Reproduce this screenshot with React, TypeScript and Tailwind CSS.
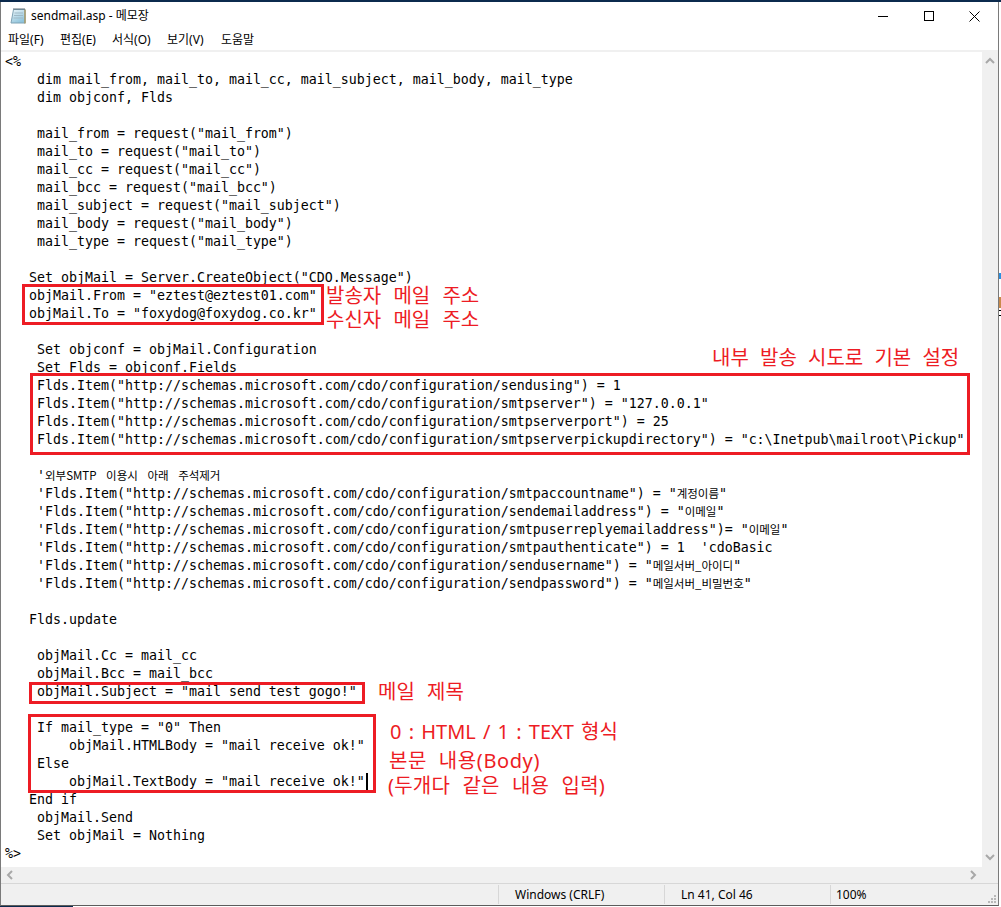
import type { ReactNode } from 'react';

const Kr = ({ children }: { children: ReactNode }) => (
  <span className="text-[11.5px] leading-none [word-spacing:7px] [font-family:'Noto_Sans_CJK_KR',sans-serif]">{children}</span>
);

const base = 'http://schemas.microsoft.com/cdo/configuration';

const codeLines: ReactNode[] = [
  '<%',
  '    dim mail_from, mail_to, mail_cc, mail_subject, mail_body, mail_type',
  '    dim objconf, Flds',
  '',
  '    mail_from = request("mail_from")',
  '    mail_to = request("mail_to")',
  '    mail_cc = request("mail_cc")',
  '    mail_bcc = request("mail_bcc")',
  '    mail_subject = request("mail_subject")',
  '    mail_body = request("mail_body")',
  '    mail_type = request("mail_type")',
  '',
  '   Set objMail = Server.CreateObject("CDO.Message")',
  '   objMail.From = "eztest@eztest01.com"',
  '   objMail.To = "foxydog@foxydog.co.kr"',
  '',
  '    Set objconf = objMail.Configuration',
  '    Set Flds = objconf.Fields',
  `    Flds.Item("${base}/sendusing") = 1`,
  `    Flds.Item("${base}/smtpserver") = "127.0.0.1"`,
  `    Flds.Item("${base}/smtpserverport") = 25`,
  `    Flds.Item("${base}/smtpserverpickupdirectory") = "c:\\Inetpub\\mailroot\\Pickup"`,
  '',
  <>{"    '"}<Kr>외부SMTP 이용시 아래 주석제거</Kr></>,
  <>{`    'Flds.Item("${base}/smtpaccountname") = "`}<Kr>계정이름</Kr>{'"'}</>,
  <>{`    'Flds.Item("${base}/sendemailaddress") = "`}<Kr>이메일</Kr>{'"'}</>,
  <>{`    'Flds.Item("${base}/smtpuserreplyemailaddress")= "`}<Kr>이메일</Kr>{'"'}</>,
  `    'Flds.Item("${base}/smtpauthenticate") = 1  'cdoBasic`,
  <>{`    'Flds.Item("${base}/sendusername") = "`}<Kr>메일서버_아이디</Kr>{'"'}</>,
  <>{`    'Flds.Item("${base}/sendpassword") = "`}<Kr>메일서버_비밀번호</Kr>{'"'}</>,
  '',
  '   Flds.update',
  '',
  '    objMail.Cc = mail_cc',
  '    objMail.Bcc = mail_bcc',
  '    objMail.Subject = "mail send test gogo!"',
  '',
  '    If mail_type = "0" Then',
  '        objMail.HTMLBody = "mail receive ok!"',
  '    Else',
  <>{'        objMail.TextBody = "mail receive ok!"'}<span className="ml-px inline-block h-[18px] w-0 border-l-2 border-black align-middle" /></>,
  '   End if',
  '    objMail.Send',
  '    Set objMail = Nothing',
  '%>',
];

const menus = [
  { label: '파일(F)', w: 'w-[52px]' },
  { label: '편집(E)', w: 'w-[52px]' },
  { label: '서식(O)', w: 'w-[55px]' },
  { label: '보기(V)', w: 'w-[54px]' },
  { label: '도움말', w: 'w-[50px]' },
];

// red callouts drawn on top of the screenshot's text
const boxes = [
  'left-[22px] top-[232px] h-[41px] w-[302px]',
  'left-[30px] top-[321px] h-[82px] w-[940px]',
  'left-[29px] top-[630px] h-[22px] w-[336px]',
  'left-[28px] top-[662px] h-[79px] w-[348px]',
];

const notes = [
  { text: '발송자 메일 주소', cls: 'left-[326px] top-[232px] [word-spacing:7px]' },
  { text: '수신자 메일 주소', cls: 'left-[326px] top-[256px] [word-spacing:7px]' },
  { text: '내부 발송 시도로 기본 설정', cls: 'left-[712px] top-[294px] [word-spacing:6px]' },
  { text: '메일 제목', cls: 'left-[378px] top-[628px] [word-spacing:7px]' },
  { text: '0 : HTML / 1 : TEXT 형식', cls: 'left-[390px] top-[668px] text-[19.5px] [word-spacing:2px]' },
  { text: '본문 내용(Body)', cls: 'left-[389px] top-[697px] tracking-[0.6px] [word-spacing:6px]' },
  { text: '(두개다 같은 내용 입력)', cls: 'left-[388px] top-[722px] tracking-[0.2px] [word-spacing:7px]' },
];

function Chevron({ dir }: { dir: 'up' | 'down' | 'left' | 'right' }) {
  const points = {
    up: '1,7 5,3 9,7',
    down: '1,3 5,7 9,3',
    left: '7,1 3,5 7,9',
    right: '3,1 7,5 3,9',
  }[dir];
  return (
    <svg width="10" height="10" viewBox="0 0 10 10">
      <polyline points={points} fill="none" stroke="#a8a8a8" strokeWidth="2" />
    </svg>
  );
}

function NotepadIcon() {
  return (
    <svg width="17" height="18" viewBox="0 0 17 18" className="shrink-0">
      <defs>
        <linearGradient id="page" x1="0" y1="0" x2="0.6" y2="1">
          <stop offset="0" stopColor="#eef7fa" />
          <stop offset="1" stopColor="#8fc4dc" />
        </linearGradient>
      </defs>
      <path d="M3.5 2.5 H15 V16 H1 Z" fill="url(#page)" stroke="#7fa3b5" />
      <path d="M15 2.5 V16.5" stroke="#a89a68" strokeWidth="1.5" />
      <path d="M4 1 V3 M6 1 V3 M8 1 V3 M10 1 V3 M12 1 V3 M14 1 V3" stroke="#5f6f78" />
      <path d="M4.5 6 H13 M4 8.5 H13 M3.5 11 H13" stroke="#9fb9c6" />
    </svg>
  );
}

function Grip() {
  return (
    <svg width="9" height="9" viewBox="0 0 9 9" className="shrink-0" fill="#b8b8b8">
      <path d="M6 0 h2 v2 h-2 z M3 3 h2 v2 h-2 z M6 3 h2 v2 h-2 z M0 6 h2 v2 h-2 z M3 6 h2 v2 h-2 z M6 6 h2 v2 h-2 z" />
    </svg>
  );
}

export default function App() {
  return (
    <div className="flex h-[907px] w-[1001px] flex-col overflow-hidden bg-white text-black [font-family:'Noto_Sans','Noto_Sans_CJK_KR',sans-serif]">
      <div className="h-[2px] shrink-0 bg-[#0b2a4d]" />

      <div className="flex min-h-0 flex-1">
        <div className="flex min-w-0 flex-1 flex-col border-r border-b border-l border-r-[#7a7a7a] border-b-[#5c5c5c] border-l-[#7a7a7a]">
          {/* title bar */}
          <div className="flex h-[28px] shrink-0 items-center">
            <div className="flex items-center gap-[4px] pl-[9px] text-[12px]">
              <NotepadIcon />
              <span>sendmail.asp - 메모장</span>
            </div>
            <div className="ml-auto flex h-full items-center">
              <div className="flex w-[46px] justify-center">
                <div className="h-px w-[10px] bg-black" />
              </div>
              <div className="flex w-[46px] justify-center">
                <div className="size-[10px] border border-black" />
              </div>
              <div className="flex w-[46px] justify-center pr-px">
                <svg width="11" height="11" viewBox="0 0 11 11">
                  <path d="M0.5 0.5 L10.5 10.5 M10.5 0.5 L0.5 10.5" stroke="#000" strokeWidth="1" />
                </svg>
              </div>
            </div>
          </div>

          {/* menu */}
          <div className="flex h-[20px] shrink-0 items-center pl-[7px] text-[12px]">
            {menus.map((m) => (
              <span key={m.label} className={m.w}>
                {m.label}
              </span>
            ))}
          </div>
          <div className="h-[2px] shrink-0 bg-[#f0f0f0]" />

          {/* editor */}
          <div className="flex min-h-0 flex-1">
            <div className="flex min-w-0 flex-1 flex-col">
              <div className="relative min-h-0 flex-1 pt-px pl-[4px]">
                <pre className="m-0 text-[13.29px] leading-[18px] [font-family:'DejaVu_Sans_Mono',monospace]">
                  {codeLines.map((line, i) => (
                    <div key={i} className="h-[18px] whitespace-pre">
                      {line}
                    </div>
                  ))}
                </pre>
                {boxes.map((b) => (
                  <div key={b} className={`absolute -ml-px border-[3px] border-[#ed1c24] ${b}`} />
                ))}
                {notes.map((n) => (
                  <span
                    key={n.text}
                    className={`absolute -ml-px text-[20px] leading-[24px] whitespace-nowrap text-[#ed1c24] ${n.cls}`}
                  >
                    {n.text}
                  </span>
                ))}
              </div>
              <div className="flex h-[16px] shrink-0 items-center justify-between bg-[#f0f0f0] px-[4px]">
                <Chevron dir="left" />
                <Chevron dir="right" />
              </div>
            </div>
            <div className="flex w-[16px] shrink-0 flex-col items-center justify-between bg-[#f0f0f0] py-[4px]">
              <Chevron dir="up" />
              <div className="mb-[17px]">
                <Chevron dir="down" />
              </div>
            </div>
          </div>

          {/* status bar */}
          <div className="flex h-[22px] shrink-0 border-t border-[#d7d7d7] bg-[#f0f0f0] text-[12px] leading-[19px]">
            <div className="w-[497px] shrink-0" />
            <div className="mt-px h-[19px] w-[166px] shrink-0 border-l border-[#d7d7d7] pl-[16px]">Windows (CRLF)</div>
            <div className="mt-px h-[19px] w-[166px] shrink-0 border-l border-[#d7d7d7] pl-[16px]">Ln 41, Col 46</div>
            <div className="mt-px h-[19px] border-l border-[#d7d7d7] pl-[5px]">100%</div>
            <div className="mt-auto mb-[1px] ml-auto pr-px">
              <Grip />
            </div>
          </div>
        </div>

        {/* sliver of whatever sits behind the window */}
        <div className="flex w-[2px] shrink-0 flex-col">
          <div className="h-[271px]" />
          <div className="h-[6px] bg-[#2b8fe0]" />
          <div className="h-[18px]" />
          <div className="h-[11px] bg-[#c98a4a]" />
          <div className="h-[2px]" />
          <div className="h-px bg-black" />
          <div className="h-[4px]" />
          <div className="h-px bg-black" />
        </div>
      </div>

      <div className="flex h-px shrink-0">
        <div className="h-full w-[73px] bg-[#0b2a4d]" />
      </div>
    </div>
  );
}
